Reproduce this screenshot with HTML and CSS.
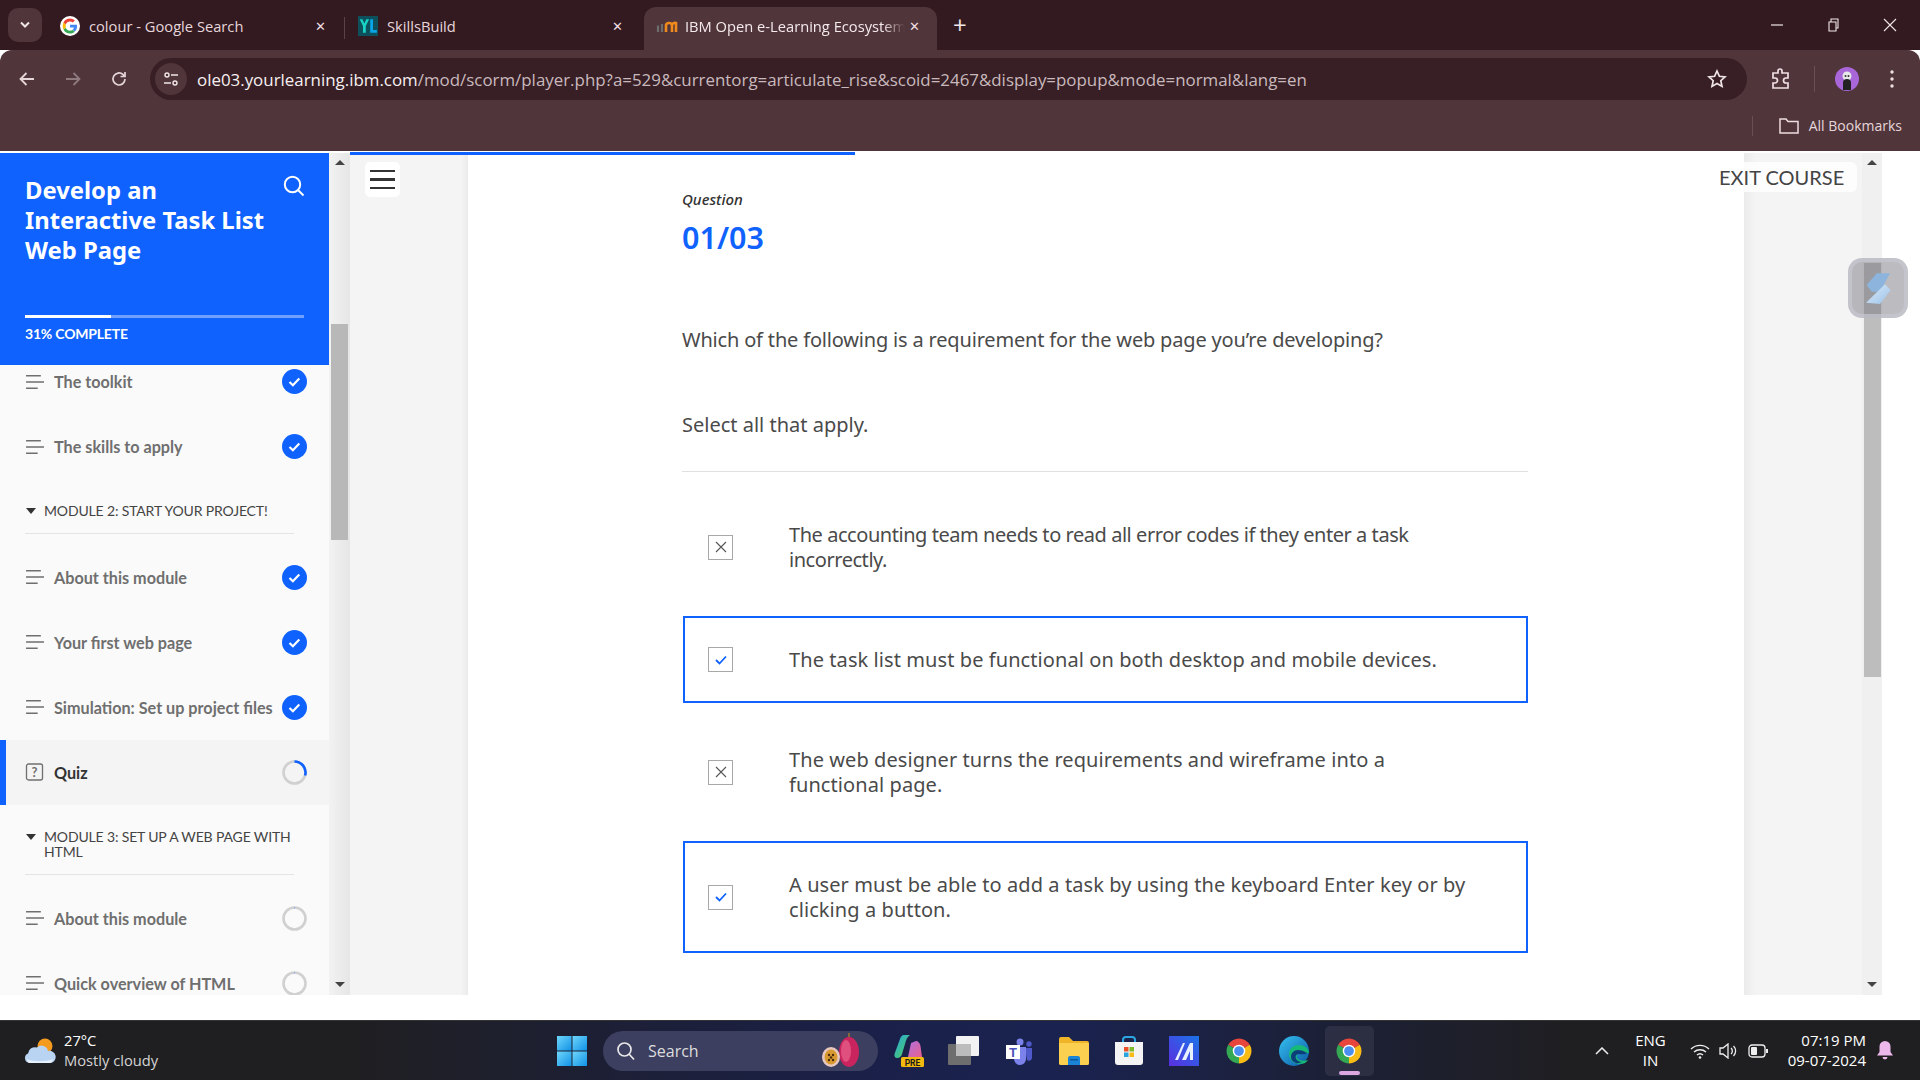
FILE: index.html
```html
<!DOCTYPE html>
<html>
<head>
	<title>IBM Open e-Learning Ecosystem</title>
	<link rel="stylesheet" href="styles.css">
</head>
<body>
	<svg class="defs" width="0" height="0">
		<defs>
			<symbol id="i-lines" viewBox="0 0 18 14"><path d="M1 1h14M1 7h17M1 13h11" stroke="#6f6f6f" stroke-width="1.4" fill="none"/></symbol>
			<symbol id="i-done" viewBox="0 0 25 25"><circle cx="12.5" cy="12.5" r="12.5" fill="#0f62fe"/><path d="M7.5 13l3.4 3.2 6.4-6.6" stroke="#fff" stroke-width="2.2" fill="none"/></symbol>
			<symbol id="i-ring" viewBox="0 0 25 25"><circle cx="12.5" cy="12.5" r="11" fill="none" stroke="#d0d0d0" stroke-width="2.6"/><path d="M12.5 1v1.6" stroke="#8fb0ee" stroke-width="1"/></symbol>
			<symbol id="i-chrome" viewBox="0 0 48 48">
				<path fill="#e8453c" d="M24 24L6.700 14A20 20 0 0 1 41.300 14Z"/>
				<path fill="#f9bc15" d="M24 24L41.300 14A20 20 0 0 1 24 44Z"/>
				<path fill="#34a853" d="M24 24L24 44A20 20 0 0 1 6.700 14Z"/>
				<circle cx="24" cy="24" r="10" fill="#fff"/>
				<circle cx="24" cy="24" r="7.800" fill="#4a8ff0"/>
			</symbol>
			<linearGradient id="g-win" x1="0" y1="0" x2="1" y2="1"><stop offset="0" stop-color="#6fd6fb"/><stop offset="1" stop-color="#1092e6"/></linearGradient>
			<linearGradient id="g-maze" x1="0" y1="1" x2="1" y2="0"><stop offset="0" stop-color="#5b2fe0"/><stop offset="1" stop-color="#1a74e8"/></linearGradient>
			<linearGradient id="g-edge" x1="0" y1="0" x2="1" y2="1"><stop offset="0" stop-color="#35c1f1"/><stop offset="1" stop-color="#0c59a4"/></linearGradient>
			<linearGradient id="g-copilot" x1="0" y1="0" x2="1" y2="1"><stop offset="0" stop-color="#2aa8e8"/><stop offset=".6" stop-color="#3fc08a"/><stop offset="1" stop-color="#e8c22f"/></linearGradient>
			<linearGradient id="g-copilot2" x1="0" y1="0" x2="1" y2="1"><stop offset="0" stop-color="#b06fe0"/><stop offset="1" stop-color="#e8608c"/></linearGradient>
			<linearGradient id="g-mark" x1="0" y1="0" x2="1" y2="1"><stop offset="0" stop-color="#dcebfa"/><stop offset="1" stop-color="#9cc2e8"/></linearGradient>
		</defs>
	</svg>

	<div class="tabstrip">
		<div class="tab-menu"><svg width="12" height="8" viewBox="0 0 12 8"><path d="M2 1.500l4 4 4-4" stroke="#f0e6e8" stroke-width="2" fill="none"/></svg></div>
		<div class="tab tab-first">
			<svg class="favicon" viewBox="0 0 48 48">
				<circle cx="24" cy="24" r="24" fill="#fff"/>
				<path fill="#4285f4" d="M41 24.500c0-1.300-.1-2.500-.4-3.600H24v6.900h9.600c-.4 2.200-1.700 4.100-3.500 5.300l5.500 4.300c3.300-3 5.400-7.500 5.400-12.900z"/>
				<path fill="#34a853" d="M24 42c4.700 0 8.600-1.500 11.600-4.200l-5.500-4.300c-1.500 1-3.500 1.700-6.100 1.700-4.600 0-8.600-3.100-10-7.300l-5.700 4.400C11.200 38.200 17.100 42 24 42z"/>
				<path fill="#fbbc05" d="M14 27.900c-.8-2.400-.8-5.400 0-7.800l-5.700-4.400c-2.400 4.900-2.400 11.700 0 16.600z"/>
				<path fill="#ea4335" d="M24 13.200c2.600 0 4.900.9 6.700 2.600l5-5C32.600 7.900 28.700 6 24 6 17.100 6 11.200 9.800 8.300 15.700l5.700 4.400c1.400-4.200 5.400-6.900 10-6.900z"/>
			</svg>
			<span class="tab-title">colour - Google Search</span>
			<span class="tab-close">✕</span>
		</div>
		<div class="tab-sep"></div>
		<div class="tab">
			<svg class="favicon" viewBox="0 0 18 18">
				<rect width="18" height="18" fill="#0e4f5c"/>
				<path d="M1.500 3l3 6v6h2.500V9l3-6H7.500L5.700 6.800 4 3z" fill="#19d3c5"/>
				<path d="M11 3h2.500v9.500H17V15h-6z" fill="#0aa5e8"/>
			</svg>
			<span class="tab-title">SkillsBuild</span>
			<span class="tab-close">✕</span>
		</div>
		<div class="tab tab-active">
			<svg class="favicon favicon-m" viewBox="0 0 22 14">
				<path d="M2 13V6.500M6 13V5" stroke="#6d6d6d" stroke-width="2.200" fill="none"/>
				<path d="M10 13V6a3 3 0 0 1 3-2 3 3 0 0 1 3 2v7M16 6a3 3 0 0 1 4-2v9" stroke="#f08a1d" stroke-width="2.600" fill="none"/>
			</svg>
			<span class="tab-title tab-title-fade">IBM Open e-Learning Ecosystem</span>
			<span class="tab-close">✕</span>
		</div>
		<div class="tab-new">+</div>
		<div class="win-controls">
			<svg width="14" height="12" viewBox="0 0 14 12"><path d="M0 6h12" stroke="#f0e6e8" stroke-width="1.200"/></svg>
			<svg width="12" height="14" viewBox="0 0 12 14"><path d="M1 4h7v9H1zM3 4V1h7v9H8" stroke="#f0e6e8" stroke-width="1.100" fill="none"/></svg>
			<svg width="14" height="14" viewBox="0 0 14 14"><path d="M1 1l12 12M13 1L1 13" stroke="#f0e6e8" stroke-width="1.100"/></svg>
		</div>
	</div>

	<div class="toolbar">
		<div class="toolbar-main">
			<svg class="nav-icon" viewBox="0 0 18 18"><path d="M16 9H3M8.500 3L2.500 9l6 6" stroke="#e6d6da" stroke-width="1.800" fill="none"/></svg>
			<svg class="nav-icon nav-dim" viewBox="0 0 18 18"><path d="M2 9h13M9.500 3l6 6-6 6" stroke="#8f7a7f" stroke-width="1.800" fill="none"/></svg>
			<svg class="nav-icon" viewBox="0 0 18 18"><path d="M15 9a6 6 0 1 1-2-4.500L15 6.500M15 2v4.500h-4.500" stroke="#e6d6da" stroke-width="1.700" fill="none"/></svg>
			<div class="omnibox">
				<div class="site-info">
					<svg width="16" height="16" viewBox="0 0 16 16"><circle cx="4" cy="4" r="2" stroke="#f0e6e8" stroke-width="1.400" fill="none"/><circle cx="12" cy="12" r="2" stroke="#f0e6e8" stroke-width="1.400" fill="none"/><path d="M8 4h7M1 12h7" stroke="#f0e6e8" stroke-width="1.600"/></svg>
				</div>
				<div class="url"><span class="url-host">ole03.yourlearning.ibm.com</span>/mod/scorm/player.php?a=529&amp;currentorg=articulate_rise&amp;scoid=2467&amp;display=popup&amp;mode=normal&amp;lang=en</div>
				<svg class="star" width="20" height="20" viewBox="0 0 20 20"><path d="M10 2l2.400 5.300 5.600.6-4.200 3.800 1.200 5.700L10 14.500 5 17.400l1.200-5.700L2 7.900l5.600-.6z" stroke="#f0e6e8" stroke-width="1.700" fill="none"/></svg>
			</div>
			<svg class="ext-icon" width="20" height="22" viewBox="0 0 20 22"><path d="M2 5h5V3a2 2 0 0 1 4 0v2h6v5h-2a2.500 2.500 0 0 0 0 5h2v5H2v-5h2a2.500 2.500 0 0 0 0-5H2z" stroke="#f0e0e4" stroke-width="1.700" fill="none"/></svg>
			<div class="toolbar-sep"></div>
			<svg class="avatar" width="24" height="24" viewBox="0 0 24 24">
				<circle cx="12" cy="12" r="12" fill="#a866d8"/>
				<circle cx="12" cy="9" r="4.500" fill="#e8e8e8"/>
				<path d="M8 23v-7a4 4 0 0 1 8 0v7z" fill="#222"/>
				<circle cx="10.500" cy="9" r="1" fill="#333"/><circle cx="13.500" cy="9" r="1" fill="#333"/>
			</svg>
			<svg class="dots" width="4" height="18" viewBox="0 0 4 18"><circle cx="2" cy="2" r="1.700" fill="#f0e0e4"/><circle cx="2" cy="9" r="1.700" fill="#f0e0e4"/><circle cx="2" cy="16" r="1.700" fill="#f0e0e4"/></svg>
		</div>
		<div class="bookmarks">
			<div class="bookmarks-sep"></div>
			<svg width="20" height="16" viewBox="0 0 20 16"><path d="M1 1h6l2 2.500h10V15H1z" stroke="#eedde1" stroke-width="1.500" fill="none"/></svg>
			<span>All Bookmarks</span>
		</div>
	</div>

	<div class="page">
		<div class="sidebar">
			<div class="course-head">
				<div class="course-top">
					<div class="course-title">Develop an Interactive Task List Web Page</div>
					<svg class="course-search" width="22" height="22" viewBox="0 0 22 22"><circle cx="9.500" cy="9.500" r="7.700" stroke="#fff" stroke-width="2" fill="none"/><path d="M15 15l5.500 5.500" stroke="#fff" stroke-width="2"/></svg>
				</div>
				<div class="progress"><div class="progress-fill"></div></div>
				<div class="progress-label">31% COMPLETE</div>
			</div>
			<div class="lessons">
				<div class="row"><svg class="row-icon"><use href="#i-lines"/></svg><span>The toolkit</span><svg class="row-state"><use href="#i-done"/></svg></div>
				<div class="row"><svg class="row-icon"><use href="#i-lines"/></svg><span>The skills to apply</span><svg class="row-state"><use href="#i-done"/></svg></div>
				<div class="module"><i class="caret"></i><span>Module 2: Start your project!</span></div>
				<div class="row"><svg class="row-icon"><use href="#i-lines"/></svg><span>About this module</span><svg class="row-state"><use href="#i-done"/></svg></div>
				<div class="row"><svg class="row-icon"><use href="#i-lines"/></svg><span>Your first web page</span><svg class="row-state"><use href="#i-done"/></svg></div>
				<div class="row"><svg class="row-icon"><use href="#i-lines"/></svg><span>Simulation: Set up project files</span><svg class="row-state"><use href="#i-done"/></svg></div>
				<div class="row row-current">
					<svg class="row-icon" viewBox="0 0 18 18"><rect x="1" y="1" width="16" height="16" rx="2" stroke="#6f6f6f" stroke-width="1.300" fill="none"/><text x="9" y="14" font-size="13" text-anchor="middle" fill="#6f6f6f" font-family="Lato">?</text></svg>
					<span>Quiz</span>
					<svg class="row-state" viewBox="0 0 25 25"><circle cx="12.500" cy="12.500" r="11" fill="none" stroke="#d0d0d0" stroke-width="2.600"/><path d="M12.500 1.500a11 11 0 0 1 10.600 14" fill="none" stroke="#0f62fe" stroke-width="2.600"/></svg>
				</div>
				<div class="module"><i class="caret"></i><span>Module 3: Set up a web page with HTML</span></div>
				<div class="row"><svg class="row-icon"><use href="#i-lines"/></svg><span>About this module</span><svg class="row-state"><use href="#i-ring"/></svg></div>
				<div class="row"><svg class="row-icon"><use href="#i-lines"/></svg><span>Quick overview of HTML</span><svg class="row-state"><use href="#i-ring"/></svg></div>
			</div>
		</div>
		<div class="scrollbar scrollbar-side">
			<i class="arrow-up"></i>
			<div class="thumb thumb-side"></div>
			<i class="arrow-down"></i>
		</div>
		<div class="gutter gutter-left">
			<div class="menu-btn"><i></i><i></i><i></i></div>
		</div>
		<div class="content">
			<div class="progress-top"></div>
			<div class="question-label">Question</div>
			<div class="question-count">01/03</div>
			<p class="question-text">Which of the following is a requirement for the web page you’re developing?</p>
			<p class="question-hint">Select all that apply.</p>
			<div class="options">
				<div class="option">
					<div class="box"><svg width="12" height="12" viewBox="0 0 12 12"><path d="M1 1l10 10M11 1L1 11" stroke="#555" stroke-width="1.100"/></svg></div>
					<div class="option-text option-tight">The accounting team needs to read all error codes if they enter a task incorrectly.</div>
				</div>
				<div class="option option-on">
					<div class="box"><svg width="12" height="10" viewBox="0 0 12 10"><path d="M1 5l3.500 3.500L11 1.500" stroke="#0f62fe" stroke-width="1.800" fill="none"/></svg></div>
					<div class="option-text">The task list must be functional on both desktop and mobile devices.</div>
				</div>
				<div class="option">
					<div class="box"><svg width="12" height="12" viewBox="0 0 12 12"><path d="M1 1l10 10M11 1L1 11" stroke="#555" stroke-width="1.100"/></svg></div>
					<div class="option-text">The web designer turns the requirements and wireframe into a functional page.</div>
				</div>
				<div class="option option-on">
					<div class="box"><svg width="12" height="10" viewBox="0 0 12 10"><path d="M1 5l3.500 3.500L11 1.500" stroke="#0f62fe" stroke-width="1.800" fill="none"/></svg></div>
					<div class="option-text">A user must be able to add a task by using the keyboard Enter key or by clicking a button.</div>
				</div>
			</div>
		</div>
		<div class="gutter gutter-right"></div>
		<div class="scrollbar scrollbar-main">
			<i class="arrow-up"></i>
			<div class="thumb thumb-main"></div>
			<i class="arrow-down"></i>
		</div>
		<div class="exit-course">EXIT COURSE</div>
		<div class="float-widget">
			<svg width="36" height="36" viewBox="0 0 36 36">
				<path d="M16.700 3.300H30L20 21.700h-8.300L6.700 15z" fill="#8db4dc"/>
				<path d="M25 14.300L30.700 20 20 34 6 32.700z" fill="url(#g-mark)"/>
			</svg>
		</div>
	</div>

	<div class="page-gap"></div>

	<div class="taskbar">
		<div class="weather">
			<svg width="32" height="32" viewBox="0 0 32 32">
				<circle cx="21" cy="11" r="7.500" fill="#f39a1f"/>
				<path d="M5 28a5 5 0 0 1-1-9.500 7 7 0 0 1 9-6 6.500 6.500 0 0 1 11 3.500 6 6 0 0 1 3 12z" fill="#b9d4f2"/>
				<path d="M3 24c5 3 20 3 26 0-.5 2.500-2 4-4 4H6c-2 0-3-2-3-4z" fill="#e6f0fb"/>
			</svg>
			<div class="weather-text"><div>27°C</div><div class="weather-sub">Mostly cloudy</div></div>
		</div>
		<div class="task-center">
			<svg class="win-logo" width="30" height="30" viewBox="0 0 30 30">
				<rect width="14.500" height="14.500" fill="url(#g-win)"/><rect x="15.500" width="14.500" height="14.500" fill="url(#g-win)"/>
				<rect y="15.500" width="14.500" height="14.500" fill="url(#g-win)"/><rect x="15.500" y="15.500" width="14.500" height="14.500" fill="url(#g-win)"/>
			</svg>
			<div class="task-search">
				<svg width="20" height="20" viewBox="0 0 20 20"><circle cx="8.500" cy="8.500" r="6.500" stroke="#e8e8e8" stroke-width="1.700" fill="none"/><path d="M13 13l5 5.500" stroke="#e8e8e8" stroke-width="1.700"/></svg>
				<span>Search</span>
				<svg class="fruit" width="40" height="36" viewBox="0 0 40 36">
					<ellipse cx="28" cy="19" rx="10" ry="15" fill="#c9245e"/>
					<ellipse cx="25" cy="18" rx="5" ry="11" fill="#e0507e"/>
					<path d="M28 4V0" stroke="#9a7a30" stroke-width="1.500"/>
					<ellipse cx="10" cy="24" rx="9" ry="10" fill="#e8c8c0"/>
					<ellipse cx="10" cy="24" rx="6.500" ry="7.500" fill="#d89a30"/>
					<circle cx="8" cy="22" r="1.200" fill="#4a2a10"/><circle cx="12" cy="22" r="1.200" fill="#4a2a10"/><circle cx="8" cy="27" r="1.200" fill="#4a2a10"/><circle cx="12" cy="27" r="1.200" fill="#4a2a10"/><circle cx="10" cy="24.500" r="1.200" fill="#4a2a10"/>
				</svg>
			</div>
			<div class="task-apps">
				<div class="app">
					<svg width="30" height="32" viewBox="0 0 30 32">
						<path d="M10 0h6c-3 2-4 5-5 9l-3 10c-.6 2-2 4-5 4-2 0-3-2-2.500-4L6 4c.6-2 2-4 4-4z" fill="url(#g-copilot)"/>
						<path d="M17 8l5-2c2 0 4 2 4.500 5l1.500 11H14z" fill="url(#g-copilot2)"/>
						<rect x="7" y="22" width="23" height="10" rx="1.500" fill="#f2b90f"/>
						<text x="18.500" y="30.500" font-size="8.500" font-weight="700" text-anchor="middle" fill="#1a1a1a" font-family="Roboto">PRE</text>
					</svg>
				</div>
				<div class="app">
					<svg width="32" height="30" viewBox="0 0 32 30"><rect x="8" width="23" height="20" rx="1" fill="#f2f2f2"/><rect y="8" width="23" height="21" rx="1" fill="#6e6e6e"/><rect x="8" y="8" width="15" height="12" fill="#bcbcbc"/></svg>
				</div>
				<div class="app">
					<svg width="28" height="28" viewBox="0 0 28 28">
						<circle cx="15" cy="5" r="3.500" fill="#7b83eb"/><circle cx="24" cy="7" r="2.700" fill="#5059c9"/>
						<path d="M20 11h7v10a3 3 0 0 1-5 2z" fill="#5059c9"/>
						<path d="M9 10h12v12a6 6 0 0 1-12 0z" fill="#7b83eb"/>
						<rect x="1" y="8" width="14" height="14" fill="#fff"/>
						<text x="8" y="19.500" font-size="13" font-weight="700" text-anchor="middle" fill="#4b53bc" font-family="Roboto">T</text>
					</svg>
				</div>
				<div class="app">
					<svg width="30" height="28" viewBox="0 0 30 28">
						<path d="M0 2a2 2 0 0 1 2-2h8l4 4h14a2 2 0 0 1 2 2v20a2 2 0 0 1-2 2H2a2 2 0 0 1-2-2z" fill="#f0b429"/>
						<path d="M0 6h30v20a2 2 0 0 1-2 2H2a2 2 0 0 1-2-2z" fill="#fbcf4f"/>
						<path d="M9 28v-7a2 2 0 0 1 2-2h8a2 2 0 0 1 2 2v7z" fill="#1a85d6"/>
						<rect x="11" y="22" width="8" height="1.500" fill="#0b5aa0"/>
					</svg>
				</div>
				<div class="app">
					<svg width="30" height="30" viewBox="0 0 30 30">
						<path d="M9 6V4a3 3 0 0 1 3-3h6a3 3 0 0 1 3 3v2" stroke="#2aa5e0" stroke-width="2" fill="none"/>
						<path d="M1 6h28v20a3 3 0 0 1-3 3H4a3 3 0 0 1-3-3z" fill="#f4f4f4"/>
						<rect x="10" y="11" width="4.500" height="4.500" fill="#e8532b"/><rect x="15.500" y="11" width="4.500" height="4.500" fill="#7fba2a"/>
						<rect x="10" y="16.500" width="4.500" height="4.500" fill="#2aa5e0"/><rect x="15.500" y="16.500" width="4.500" height="4.500" fill="#fbbb16"/>
					</svg>
				</div>
				<div class="app">
					<svg width="30" height="30" viewBox="0 0 30 30">
						<rect width="30" height="30" fill="url(#g-maze)"/>
						<path d="M6 24L14 7h2l-7 17zM13 24l8-17h3v17h-3V15l-4 9z" fill="#e8f0ff"/>
					</svg>
				</div>
				<div class="app"><svg width="30" height="30"><use href="#i-chrome"/></svg></div>
				<div class="app">
					<svg width="30" height="30" viewBox="0 0 30 30">
						<circle cx="15" cy="15" r="15" fill="url(#g-edge)"/>
						<path d="M30 17c0-5-5-8-10-8-6 0-10 4-10 9 0 6 5 10 11 10 3 0 6-1 8-4-3 1-8 1-10-1-2-1.500-2-4 0-5 3-1.500 8-1 11-1z" fill="#17b978"/>
						<path d="M12 21c0-4 3-7 7-7 3 0 6 1 9 3-2 2-6 1-9 1-3 1-3 4-1 6 1 1 3 2 5 2-2 1-4 1.500-6 1-3-1-5-3-5-6z" fill="#0c3f7a"/>
					</svg>
				</div>
				<div class="app app-active"><svg width="30" height="30"><use href="#i-chrome"/></svg><i class="app-dot"></i></div>
			</div>
		</div>
		<div class="tray">
			<svg class="tray-chevron" width="14" height="8" viewBox="0 0 14 8"><path d="M1 7l6-6 6 6" stroke="#eee" stroke-width="1.500" fill="none"/></svg>
			<div class="lang"><div>ENG</div><div>IN</div></div>
			<svg class="tray-icon" width="20" height="16" viewBox="0 0 20 16"><path d="M1 6a13 13 0 0 1 18 0M4 9a9 9 0 0 1 12 0M7 12a4.500 4.500 0 0 1 6 0" stroke="#eee" stroke-width="1.400" fill="none"/><circle cx="10" cy="14.500" r="1.300" fill="#eee"/></svg>
			<svg class="tray-icon" width="20" height="16" viewBox="0 0 20 16"><path d="M1 5h3l5-4v14l-5-4H1z" stroke="#eee" stroke-width="1.300" fill="none"/><path d="M12 5a4 4 0 0 1 0 6M14.500 3a7 7 0 0 1 0 10" stroke="#eee" stroke-width="1.300" fill="none"/></svg>
			<svg class="tray-icon" width="20" height="14" viewBox="0 0 20 14"><rect x="1" y="1" width="16" height="12" rx="3" stroke="#eee" stroke-width="1.300" fill="none"/><rect x="3" y="3" width="6" height="8" rx="1" fill="#eee"/><rect x="18" y="5" width="2" height="4" fill="#eee"/></svg>
			<div class="clock"><div>07:19 PM</div><div>09-07-2024</div></div>
			<svg class="bell" width="18" height="20" viewBox="0 0 18 20"><path d="M9 1a5.500 5.500 0 0 1 5.500 5.500V12l2.500 3.500H1L3.500 12V6.500A5.500 5.500 0 0 1 9 1z" fill="#ecb8ec"/><path d="M6.500 17h5a2.500 2.500 0 0 1-5 0z" fill="#ecb8ec"/></svg>
		</div>
	</div>
</body>
</html>
```

FILE: styles.css
```css
* {
	box-sizing: border-box;
}

html, body {
	margin: 0;
	height: 1080px;
	overflow: hidden;
	background: #fff;
}

body {
	display: flex;
	flex-direction: column;
	font-family: "Open Sans", "Noto Sans", sans-serif;
}

.defs {
	position: absolute;
}

/* browser tabs */
.tabstrip {
	height: 50px;
	flex-shrink: 0;
	background: #321a20;
	display: flex;
	align-items: flex-end;
	padding-left: 8px;
	color: #e6d6da;
	font-size: 14.7px;
}

.tab-menu {
	width: 34px;
	height: 34px;
	margin-bottom: 8px;
	border-radius: 10px;
	background: #50353a;
	display: flex;
	align-items: center;
	justify-content: center;
}

.tab {
	width: 292px;
	height: 43px;
	display: flex;
	align-items: center;
	padding: 0 17px 6px 10px;
	flex-shrink: 0;
}

.tab-first {
	margin-left: 8px;
	width: 293px;
}

.favicon {
	width: 20px;
	height: 20px;
	margin-right: 9px;
	flex-shrink: 0;
}

.favicon-m {
	height: 14px;
	width: 22px;
	margin-right: 7px;
}

.tab-title {
	flex: 1;
	white-space: nowrap;
	overflow: hidden;
}

.tab-close {
	margin-left: 4px;
	font-size: 13px;
	color: #eedde1;
}

.tab-sep {
	width: 1px;
	height: 22px;
	margin: 0 3px 11px 1px;
	background: #5a4247;
	flex-shrink: 0;
}

.tab-active {
	width: 293px;
	margin-left: 4px;
	padding-left: 12px;
	background: #50353a;
	color: #f4e9eb;
	border-radius: 12px 12px 0 0;
}

.tab-title-fade {
	-webkit-mask-image: linear-gradient(90deg, #000 90%, transparent);
	mask-image: linear-gradient(90deg, #000 90%, transparent);
}

.tab-new {
	margin: 0 0 13px 16px;
	font-size: 24px;
	line-height: 24px;
	color: #f0e6e8;
}

.win-controls {
	margin-left: auto;
	display: flex;
	align-items: center;
	gap: 43px;
	padding-right: 23px;
	height: 50px;
}

/* address bar */
.toolbar {
	height: 101px;
	background: #50353a;
	border-radius: 12px 12px 0 0;
	flex-shrink: 0;
}

.toolbar-main {
	height: 58px;
	padding: 0 0 0 18px;
	display: flex;
	align-items: center;
}

.nav-icon {
	width: 18px;
	height: 18px;
	margin-right: 28px;
	flex-shrink: 0;
}

.omnibox {
	width: 1597px;
	height: 42px;
	margin-left: -6px;
	background: #371f25;
	border-radius: 21px;
	display: flex;
	align-items: center;
	padding: 0 20px 0 5px;
	flex-shrink: 0;
}

.site-info {
	width: 32px;
	height: 32px;
	border-radius: 50%;
	background: #50353a;
	display: flex;
	align-items: center;
	justify-content: center;
}

.url {
	margin-left: 10px;
	color: #c9b9bd;
	font-size: 16.9px;
	white-space: nowrap;
}

.url-host {
	color: #f6eff0;
}

.star {
	margin-left: auto;
}

.ext-icon {
	margin-left: 24px;
	flex-shrink: 0;
}

.toolbar-sep {
	width: 1px;
	height: 26px;
	margin-left: 23px;
	background: #6a5055;
}

.avatar {
	margin-left: 20px;
	flex-shrink: 0;
}

.dots {
	margin-left: 31px;
	flex-shrink: 0;
}

.bookmarks {
	height: 35px;
	display: flex;
	align-items: center;
	justify-content: flex-end;
	padding: 0 18px 0 0;
	font-size: 14px;
	color: #e6d6da;
}

.bookmarks svg {
	margin: 0 10px 0 21px;
}

.bookmarks-sep {
	width: 1px;
	height: 20px;
	background: #6a5055;
	margin-right: 5px;
}

/* page */
.page {
	position: relative;
	height: 844px;
	display: flex;
	flex-shrink: 0;
	background: #fff;
	padding-top: 2px;
}

.sidebar {
	width: 329px;
	background: #fafafa;
	font-family: Lato, sans-serif;
	overflow: hidden;
	flex-shrink: 0;
}

.course-head {
	position: relative;
	height: 212px;
	background: #0f62fe;
	color: #fff;
	padding: 22px 25px 0;
}

.course-top {
	display: flex;
	justify-content: space-between;
	height: 130px;
}

.course-title {
	width: 252px;
	font-family: "Noto Sans", sans-serif;
	font-weight: 700;
	font-size: 23.8px;
	line-height: 30px;
}

.course-search {
	margin-right: -1px;
}

.progress {
	height: 3px;
	width: 279px;
	margin-top: 10px;
	background: #6fa0fe;
}

.progress-fill {
	width: 86px;
	height: 3px;
	background: #fff;
}

.progress-label {
	margin-top: 7px;
	font-size: 14px;
	font-weight: 700;
	letter-spacing: -0.2px;
}

.lessons {
	margin-top: -16px;
}

.row {
	height: 65px;
	display: flex;
	align-items: center;
	padding: 0 22px 0 25px;
	color: #6f6f6f;
	font-size: 16.2px;
	font-weight: 700;
}

.row-current {
	background: #f4f4f4;
	border-left: 6px solid #0f62fe;
	padding-left: 19px;
	color: #333;
}

.row-icon {
	width: 19px;
	height: 18px;
	margin-right: 10px;
	flex-shrink: 0;
}

.row-state {
	width: 25px;
	height: 25px;
	margin-left: auto;
	flex-shrink: 0;
}

.module {
	position: relative;
	margin: 0 35px 11px 25px;
	padding: 24px 0 14px 19px;
	border-bottom: 1px solid #e4e4e4;
	font-size: 14px;
	line-height: 15.5px;
	letter-spacing: -0.15px;
	color: #444;
	text-transform: uppercase;
}

.module span {
	display: block;
	margin-right: -10px;
}

.caret {
	position: absolute;
	left: 1px;
	top: 29px;
	border: 5px solid transparent;
	border-top: 6px solid #333;
	border-bottom: 0;
}

.scrollbar {
	width: 21px;
	background: linear-gradient(90deg, #f2f2f2, #e6e6e6);
	display: flex;
	flex-direction: column;
	align-items: center;
	flex-shrink: 0;
}

.arrow-up, .arrow-down {
	width: 0;
	height: 0;
	border: 5px solid transparent;
	margin-top: 7px;
}

.arrow-up {
	border-bottom: 5px solid #444;
	border-top: 0;
}

.arrow-down {
	border-top: 5px solid #444;
	border-bottom: 0;
	margin: auto 0 8px;
}

.thumb {
	width: 17px;
	background: #b8b8b8;
}

.thumb-side {
	height: 216px;
	margin-top: 159px;
}

.thumb-main {
	height: 414px;
	margin-top: 98px;
	background: #bdbdbd;
}

.scrollbar-main {
	width: 20px;
	background: #f0f0f0;
}

.gutter {
	width: 118px;
	flex-shrink: 0;
	background: #f4f4f4;
}

.gutter-left {
	background: linear-gradient(90deg, #f4f4f4 94%, #ebebeb);
	padding: 9px 0 0 15px;
}

.gutter-right {
	background: linear-gradient(90deg, #ebebeb, #f4f4f4 10%);
}

.menu-btn {
	width: 35px;
	height: 35px;
	background: #fff;
	border-radius: 5px;
	display: flex;
	flex-direction: column;
	justify-content: center;
	align-items: center;
	gap: 6px;
}

.menu-btn i {
	width: 25px;
	height: 2.5px;
	background: #333;
}

.content {
	position: relative;
	width: 1276px;
	flex-shrink: 0;
	padding: 36px 0 0 214px;
	color: #4a4a4a;
	font-family: "Noto Sans", sans-serif;
}

.progress-top {
	position: absolute;
	left: -118px;
	top: -1px;
	width: 505px;
	height: 3px;
	background: #0f62fe;
}

.question-label {
	font-size: 15px;
	line-height: 20px;
	font-style: italic;
	font-weight: 500;
	color: #333;
}

.question-count {
	margin-top: 7px;
	font-size: 30.5px;
	line-height: 42px;
	font-weight: 600;
	color: #0f62fe;
}

.question-text {
	margin: 69px 0 0;
	font-size: 20px;
	line-height: 26px;
	letter-spacing: -0.18px;
	width: 846px;
}

.question-hint {
	margin: 59px 0 0;
	font-size: 20px;
	line-height: 26px;
	width: 846px;
	padding-bottom: 33px;
	border-bottom: 1px solid #e0e0e0;
}

.options {
	width: 845px;
	margin: 19px 0 0 1px;
	display: flex;
	flex-direction: column;
	gap: 13px;
}

.option {
	display: flex;
	align-items: center;
	padding: 29px 60px 29px 23px;
	border: 2px solid transparent;
}

.option-on {
	border-color: #0f62fe;
}

.box {
	width: 25px;
	height: 25px;
	border: 1.5px solid #a8a8a8;
	display: flex;
	align-items: center;
	justify-content: center;
	flex-shrink: 0;
}

.option-text {
	margin-left: 56px;
	font-size: 20px;
	line-height: 25px;
	letter-spacing: 0.08px;
}

.option-tight {
	letter-spacing: -0.45px;
}

.exit-course {
	position: absolute;
	left: 1719px;
	top: 11px;
	width: 138px;
	height: 30px;
	padding-top: 1px;
	background: rgba(255, 255, 255, 0.8);
	border-radius: 0 6px 6px 0;
	font-family: Lato, sans-serif;
	font-size: 20px;
	line-height: 28px;
	color: #444;
}

.float-widget {
	position: absolute;
	left: 1848px;
	top: 107px;
	width: 60px;
	height: 60px;
	border-radius: 14px;
	background: rgba(120, 120, 130, 0.5);
	border: 4px solid rgba(200, 200, 210, 0.7);
	display: flex;
	align-items: center;
	justify-content: center;
}

.page-gap {
	height: 25px;
	flex-shrink: 0;
	background: #fff;
}

/* windows taskbar */
.taskbar {
	height: 60px;
	flex-shrink: 0;
	display: flex;
	align-items: center;
	border-top: 1px solid #333;
	background: linear-gradient(90deg, #1f1f21 18%, #1a2048 45%, #1a2350 55%, #1d1f2c 75%, #1f1f21 82%);
	color: #fff;
	font-family: "Open Sans", sans-serif;
	font-size: 14px;
	position: relative;
}

.weather {
	display: flex;
	align-items: center;
	width: 557px;
	padding-left: 24px;
	gap: 8px;
}

.weather-text {
	line-height: 20px;
	font-size: 14.7px;
	margin-top: -2px;
}

.weather-sub {
	color: #d4d4d4;
}

.task-center {
	display: flex;
	align-items: center;
}

.task-search {
	margin-left: 16px;
	width: 275px;
	height: 40px;
	border-radius: 20px;
	background: #3c3f60;
	display: flex;
	align-items: center;
	padding-left: 13px;
	gap: 12px;
	font-size: 16px;
	color: #ddd;
}

.fruit {
	margin-left: auto;
	margin-right: 17px;
}

.task-apps {
	display: flex;
	margin-left: 3.7px;
}

.app {
	position: relative;
	width: 55px;
	height: 50px;
	display: flex;
	align-items: center;
	justify-content: center;
}

.app-active::before {
	content: "";
	position: absolute;
	left: 3px;
	top: 0;
	width: 49px;
	height: 50px;
	border-radius: 5px;
	background: rgba(255, 255, 255, 0.07);
}

.app-active svg {
	position: relative;
}

.app-dot {
	position: absolute;
	left: 17px;
	bottom: 1px;
	width: 21px;
	height: 4px;
	border-radius: 2px;
	background: #dba6e2;
}

.tray {
	margin-left: auto;
	display: flex;
	align-items: center;
	padding-right: 54px;
	font-size: 15px;
}

.tray-chevron {
	margin-right: 26px;
}

.lang {
	text-align: center;
	line-height: 20px;
	margin-right: 24px;
	margin-top: -2px;
}

.tray-icon {
	margin-right: 9px;
}

.clock {
	margin-left: 11px;
	margin-top: -2px;
	text-align: right;
	line-height: 20px;
}

.bell {
	position: absolute;
	right: 26px;
	top: 19px;
}
```
